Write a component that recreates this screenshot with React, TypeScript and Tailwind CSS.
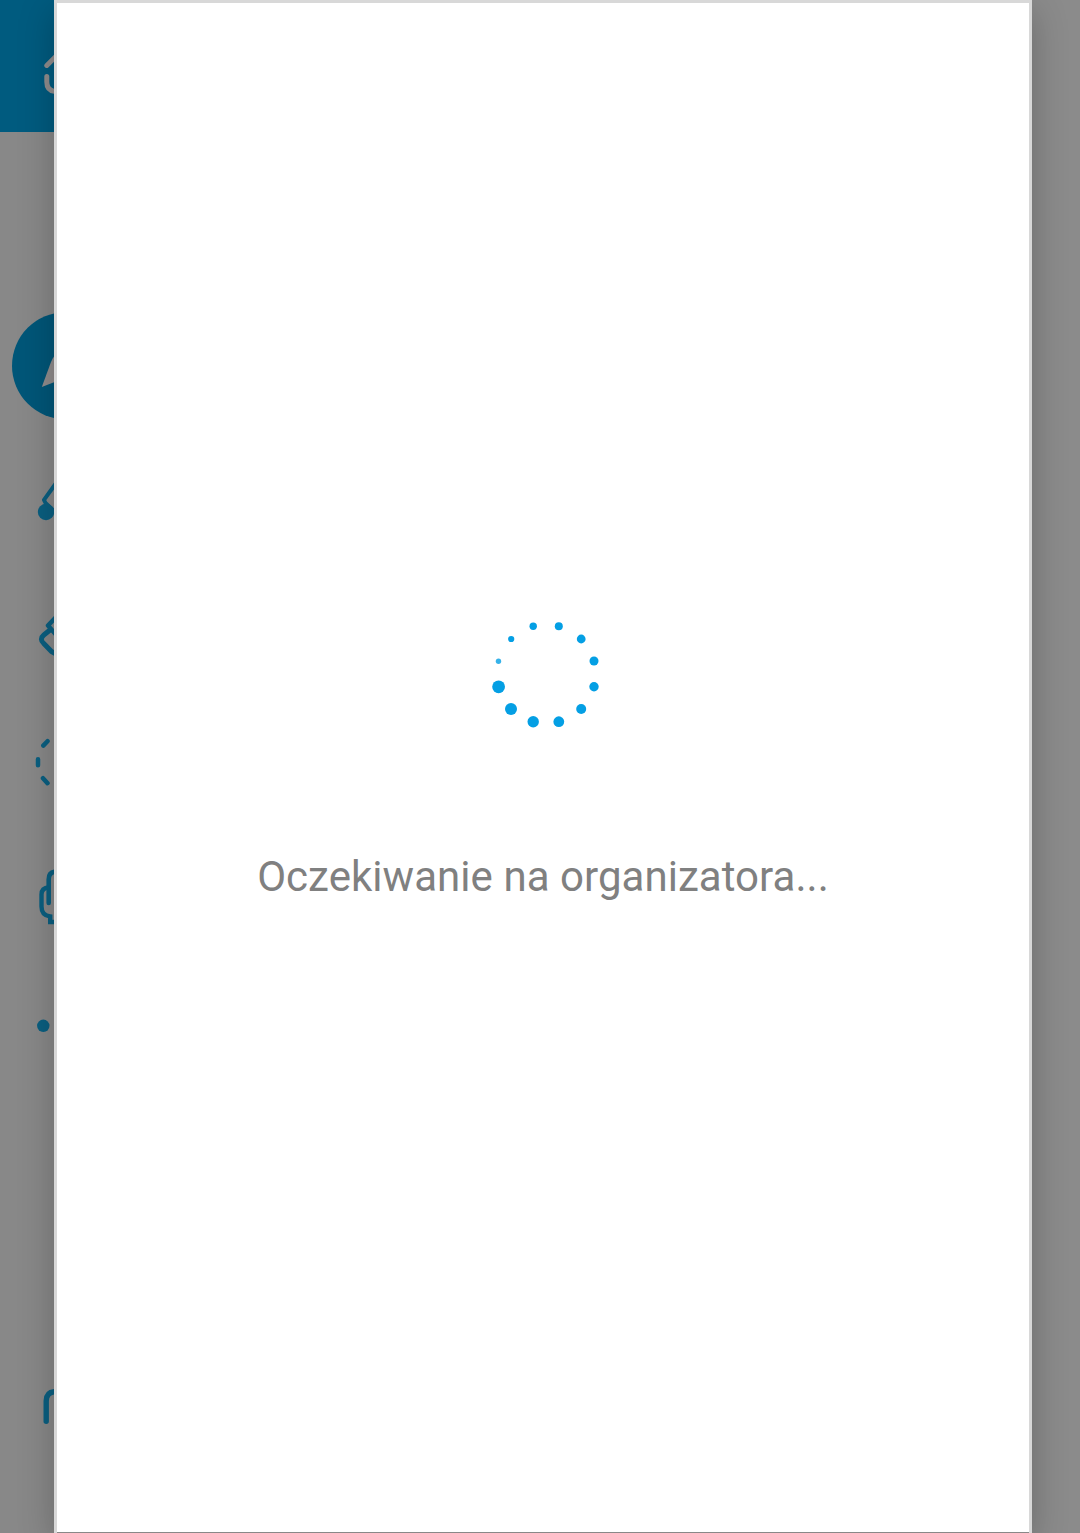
import type { ReactNode } from "react";

const BLUE = "#0a5f80";

function Tool({ children }: { children: ReactNode }) {
  return (
    <svg className="block h-[132px] w-[54px] shrink-0" viewBox="0 0 54 132" fill="none" stroke={BLUE} strokeWidth="5" strokeLinecap="round" strokeLinejoin="round">
      {children}
    </svg>
  );
}

function Sidebar() {
  return (
    <aside className="flex w-[54px] shrink-0 flex-col overflow-hidden bg-[#888888]">
      <header className="h-[132px] shrink-0 bg-[#005b7f]">
        <svg className="block h-[132px] w-[54px]" viewBox="0 0 54 132" fill="none" stroke="#918d8d" strokeWidth="5" strokeLinecap="round">
          <path d="M46.8 65.4L58 54.2" />
          <path d="M46.8 76.5V82Q46.8 91 56 91.5" />
        </svg>
      </header>
      <nav className="mt-[168px] flex flex-col">
        <Tool>
          <circle cx="65.5" cy="65.7" r="53.5" fill="#005678" stroke="none" />
          <path d="M41.8 87L51 62Q52.5 58 56 54V81.5Z" fill="#918d8d" stroke="none" />
        </Tool>
        <Tool>
          <circle cx="46" cy="80" r="8.2" fill={BLUE} stroke="none" />
          <path d="M58 48.5L44 67.8L45.5 71L56 81" strokeWidth="4" />
        </Tool>
        <Tool>
          <path d="M50 66L43.8 71Q39 75 43.8 79.5L51.5 87.5L58 91" />
          <path d="M58 51L48 61.5L58 73" strokeWidth="4.5" />
        </Tool>
        <Tool>
          <path d="M43.3 49.6L47.5 45.2M38 63.2V69.2M43 82.2L47.5 87.2" strokeWidth="4.5" />
        </Tool>
        <Tool>
          <path d="M48.7 75V51.5Q48.7 43.8 56 43.8" strokeWidth="4.6" />
          <path d="M49 59.2Q41.5 59.8 41.5 66.5V78.5Q41.5 87.5 50.2 88.5V94H58" strokeWidth="4.4" strokeLinecap="butt" strokeLinejoin="miter" />
        </Tool>
        <Tool>
          <circle cx="43.3" cy="65.8" r="6.2" fill={BLUE} stroke="none" />
        </Tool>
      </nav>
      <svg className="mt-[248px] block h-[132px] w-[54px] shrink-0" viewBox="0 0 54 132" fill="none" stroke={BLUE} strokeWidth="5.4" strokeLinecap="round">
        <path d="M46.2 81.2V61Q46.2 51.6 56 51.6" />
      </svg>
    </aside>
  );
}

const DOTS = [
  [53.2, 16.2, 3.7], [78.8, 16.2, 4], [101.2, 29, 4.4], [114, 51, 4.5],
  [114, 76.8, 4.7], [101.2, 99, 5], [78.8, 111.7, 5.4], [53.2, 111.7, 5.7],
  [31, 99, 6], [18.6, 76.8, 6.4], [18.5, 51.2, 2.7], [31.2, 29, 3.1],
];

function Spinner() {
  return (
    <svg className="h-[130px] w-[130px] blur-[0.7px]" viewBox="0 0 130 130" fill="#049fe4">
      {DOTS.map(([x, y, r], i) => (
        <circle key={i} cx={x} cy={y} r={r} opacity={r < 3 ? 0.8 : 1} />
      ))}
    </svg>
  );
}

export default function App() {
  return (
    <div className="flex h-[1533px] w-[1080px] overflow-hidden bg-[#8b8b8b]">
      <Sidebar />
      <main className="relative z-10 flex w-[978px] shrink-0 flex-col border-x-[3px] border-t-[3px] border-[#d8d8d8] bg-white shadow-[0_10px_34px_rgba(0,0,0,0.24)]">
        <section className="flex grow flex-col items-center pt-[607px]" role="status">
          <div className="ml-1">
            <Spinner />
          </div>
          <p className="mt-[112px] whitespace-nowrap font-[Roboto,sans-serif] text-[42px] leading-[50px] tracking-[0.05px] text-[#808080]">Oczekiwanie na organizatora...</p>
        </section>
        <div className="h-px shrink-0 bg-[#888888]" />
      </main>
    </div>
  );
}
